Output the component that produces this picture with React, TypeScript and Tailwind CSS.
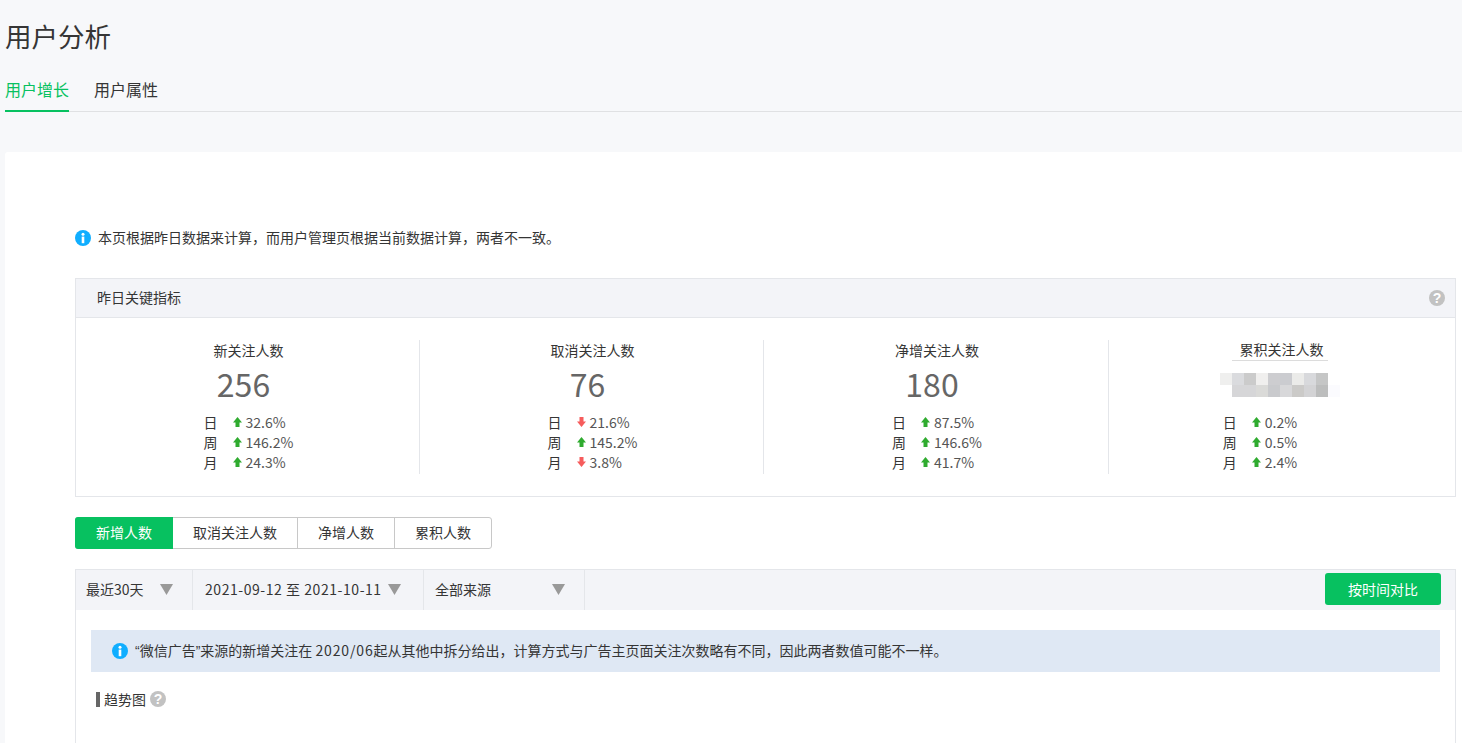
const FONT = "font-['Noto_Sans_CJK_SC','Microsoft_YaHei',sans-serif]";

const InfoIcon = () => (
  <svg width="16" height="16" viewBox="0 0 16 16" className="shrink-0">
    <circle cx="8" cy="8" r="8" fill="#10aeff" />
    <circle cx="8" cy="4.2" r="1.5" fill="#fff" />
    <rect x="6.7" y="6.6" width="2.6" height="6.6" fill="#fff" />
  </svg>
);

const HelpIcon = () => (
  <span className="flex h-4 w-4 shrink-0 items-center justify-center rounded-full bg-[#c2c2c2] font-['Liberation_Sans',sans-serif] text-[14px] leading-none font-bold text-white">
    ?
  </span>
);

const Arrow = ({ down }: { down?: boolean }) => (
  <svg width="9" height="10" viewBox="0 0 9 10" className="shrink-0">
    {down ? (
      <polygon points="2.5,0 6.5,0 6.5,4.5 9,4.5 4.5,10 0,4.5 2.5,4.5" fill="#f65c5c" />
    ) : (
      <polygon points="4.5,0 9,5.5 6.5,5.5 6.5,10 2.5,10 2.5,5.5 0,5.5" fill="#2fab2f" />
    )}
  </svg>
);

const Caret = () => (
  <svg width="13" height="11" viewBox="0 0 13 11" className="shrink-0">
    <polygon points="0,0 13,0 6.5,11" fill="#999999" />
  </svg>
);

const mosaicTop = [
  'bg-[#efefee]', 'bg-[#dadbde]', 'bg-[#cbcbcb]', 'bg-[#f0efee]', 'bg-[#cdcdd0]',
  'bg-[#cbccd0]', 'bg-[#ebebe9]', 'bg-[#d8d9dc]', 'bg-[#c5c6c6]', 'bg-white',
];
const mosaicBottom = [
  'bg-white', 'bg-[#d6d6d8]', 'bg-[#d6d6d8]', 'bg-[#dadad8]', 'bg-[#c9cacd]',
  'bg-[#d8d8da]', 'bg-[#cbcac8]', 'bg-[#d3d3d5]', 'bg-[#bcbdbd]', 'bg-[#fbfbfe]',
];

// 累积人数被打码，用色块还原
const Mosaic = () => (
  <div className="mt-[12px] mr-[5px] grid h-[24px] w-[120px] grid-cols-10">
    {[...mosaicTop, ...mosaicBottom].map((c, i) => (
      <span key={i} className={c} />
    ))}
  </div>
);

type Row = { label: string; value: string; down?: boolean };

interface MetricProps {
  title: string;
  value?: string;
  rows: Row[];
  last?: boolean;
}

const Metric = ({ title, value, rows, last }: MetricProps) => (
  <div className={`flex h-[134px] flex-col items-center ${last ? '' : 'border-r border-[#e4e6ea] pl-[2px]'}`}>
    {last ? (
      <div className="mt-[-1px] mr-[5px] border-b border-[#dcdcdc] pr-[4px] pl-[8px] text-[14px] leading-[21px] text-[#353535]">
        {title}
      </div>
    ) : (
      <div className="mt-[-1px] text-[14px] leading-[22px] text-[#353535]">{title}</div>
    )}
    {value ? (
      <div className="mr-[10px] h-[40px] text-[32px] leading-[45px] text-[#666666]">{value}</div>
    ) : (
      <div className="flex h-[40px] items-start">
        <Mosaic />
      </div>
    )}
    <div className={`mt-[11px] text-[14px] leading-[20px] text-[#353535] ${last ? 'mr-[44px]' : ''}`}>
      {rows.map((r) => (
        <div key={r.label} className="flex items-center">
          <span className="w-[29px]">{r.label}</span>
          <Arrow down={r.down} />
          <span className="ml-[4px] text-[#555555]">{r.value}</span>
        </div>
      ))}
    </div>
  </div>
);

const metrics: MetricProps[] = [
  {
    title: '新关注人数',
    value: '256',
    rows: [
      { label: '日', value: '32.6%' },
      { label: '周', value: '146.2%' },
      { label: '月', value: '24.3%' },
    ],
  },
  {
    title: '取消关注人数',
    value: '76',
    rows: [
      { label: '日', value: '21.6%', down: true },
      { label: '周', value: '145.2%' },
      { label: '月', value: '3.8%', down: true },
    ],
  },
  {
    title: '净增关注人数',
    value: '180',
    rows: [
      { label: '日', value: '87.5%' },
      { label: '周', value: '146.6%' },
      { label: '月', value: '41.7%' },
    ],
  },
  {
    title: '累积关注人数',
    rows: [
      { label: '日', value: '0.2%' },
      { label: '周', value: '0.5%' },
      { label: '月', value: '2.4%' },
    ],
    last: true,
  },
];

const Quote = ({ children }: { children: string }) => (
  <span className="font-['Liberation_Sans',sans-serif]">{children}</span>
);

export default function App() {
  return (
    <div className={`${FONT} h-[743px] overflow-hidden bg-[#f7f8fa] pl-[5px] text-[#353535]`}>
      <h1 className="pt-[17px] text-[26.5px] leading-[38px] font-normal text-[#353535]">用户分析</h1>

      <div className="mt-[14px] flex h-[43px] gap-[25px] border-b border-[#e0e1e3] text-[16px]">
        <div className="h-[43px] border-b-2 border-[#07c160] leading-[41px] text-[#07c160]">用户增长</div>
        <div className="leading-[41px]">用户属性</div>
      </div>

      <div className="mt-[40px] h-[600px] rounded-tl-[3px] bg-white pr-[6px] pl-[70px]">
        <div className="flex items-center gap-[7px] pt-[78px] text-[14px] leading-[18px]">
          <InfoIcon />
          <span className="-mt-[2px]">本页根据昨日数据来计算，而用户管理页根据当前数据计算，两者不一致。</span>
        </div>

        <section className="mt-[32px] h-[219px] border border-[#e4e6ea]">
          <div className="flex h-[39px] items-center justify-between border-b border-[#e4e6ea] bg-[#f3f4f8] pr-[10px] pl-[21px] text-[14px]">
            <span className="-mt-[2px]">昨日关键指标</span>
            <HelpIcon />
          </div>
          <div className="grid grid-cols-[344px_344px_345px_1fr] pt-[22px]">
            {metrics.map((m) => (
              <Metric key={m.title} {...m} />
            ))}
          </div>
        </section>

        <div className="mt-[20px] flex h-[32px] w-[417px] rounded-[3px] border border-[#c8c8c8] text-center text-[14px] leading-[28px]">
          <div className="-my-px -ml-px h-[32px] w-[98px] rounded-l-[3px] bg-[#07c160] leading-[30px] text-white">新增人数</div>
          <div className="h-[30px] w-[125px] border-r border-[#c8c8c8]">取消关注人数</div>
          <div className="h-[30px] w-[97px] border-r border-[#c8c8c8]">净增人数</div>
          <div className="flex-1">累积人数</div>
        </div>

        <section className="mt-[20px] h-[300px] border border-[#e4e6ea]">
          <div className="flex h-[40px] items-center bg-[#f3f4f8] pr-[14px] text-[14px]">
            <div className="flex h-full w-[117px] items-center justify-between border-r border-[#e4e6ea] pr-[19px] pb-[2px] pl-[10px]">
              <span>最近30天</span>
              <Caret />
            </div>
            <div className="flex h-full w-[231px] items-center justify-between border-r border-[#e4e6ea] pr-[22px] pb-[2px] pl-[12px]">
              <span className="tracking-[0.55px]">2021-09-12 至 2021-10-11</span>
              <Caret />
            </div>
            <div className="flex h-full w-[161px] items-center justify-between border-r border-[#e4e6ea] pr-[19px] pb-[2px] pl-[11px]">
              <span>全部来源</span>
              <Caret />
            </div>
            <button className="mb-[2px] ml-auto h-[32px] w-[116px] rounded-[3px] bg-[#07c160] text-[14px] text-white">按时间对比</button>
          </div>

          <div className="mx-[15px] mt-[20px] flex h-[42px] items-center gap-[7px] bg-[#dfe8f4] pl-[21px] text-[14px]">
            <InfoIcon />
            <span>
              <Quote>“</Quote>微信广告<Quote>”</Quote>来源的新增关注在 <span className="tracking-[0.85px]">2020/06</span>起从其他中拆分给出，计算方式与广告主页面关注次数略有不同，因此两者数值可能不一样。
            </span>
          </div>

          <div className="mt-[19px] flex items-center pl-[20px] text-[14px] leading-[16px]">
            <span className="mr-[4px] h-[15px] w-[4px] bg-[#666666]" />
            <span>趋势图</span>
            <span className="ml-[4px]">
              <HelpIcon />
            </span>
          </div>
        </section>
      </div>
    </div>
  );
}
